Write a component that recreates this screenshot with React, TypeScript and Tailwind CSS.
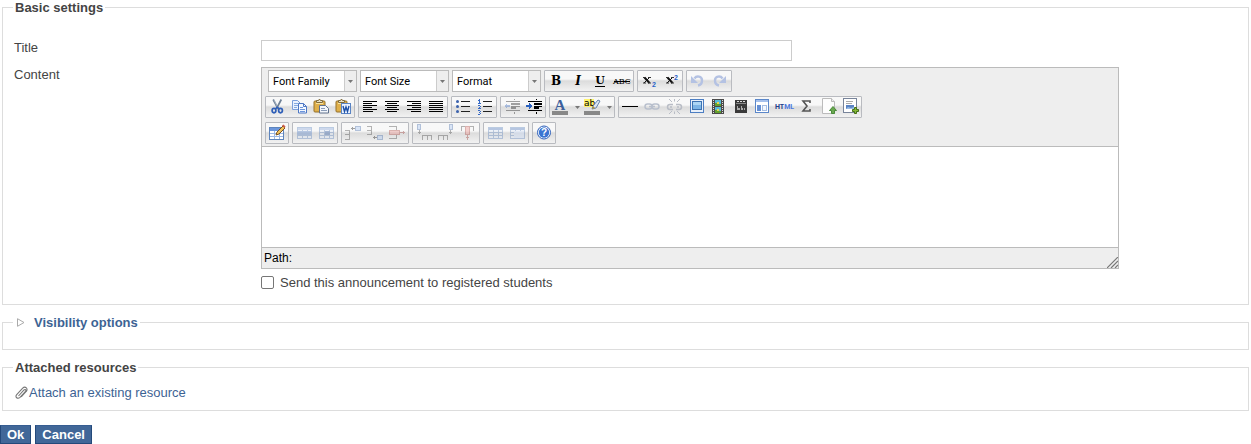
import React from "react";

type IconProps = { children: React.ReactNode; faded?: boolean; smooth?: boolean };

function Glyph({ children, faded, smooth }: IconProps) {
  return (
    <svg
      viewBox="0 0 20 20"
      width="20"
      height="20"
      aria-hidden="true"
      shapeRendering={smooth ? "auto" : "crispEdges"}
      className={faded ? "block overflow-visible opacity-35" : "block overflow-visible"}
    >
      {children}
    </svg>
  );
}

function Lines({ rows, color = "#000" }: { rows: [number, number, number][]; color?: string }) {
  return (
    <>
      {rows.map(([x, y, w]) => (
        <rect key={`${x}-${y}`} x={x} y={y} width={w} height="1" fill={color} />
      ))}
    </>
  );
}

const serif = "'Liberation Serif', serif";
const wideSerif = "'DejaVu Serif', serif";
const sans = "'Liberation Sans', sans-serif";

function Letter({ children, ...rest }: React.SVGProps<SVGTextElement>) {
  return (
    <text textAnchor="middle" fontFamily={serif} fontWeight="bold" fontSize="13" x="10" y="14" {...rest}>
      {children}
    </text>
  );
}

const Clipboard = () => (
  <>
    <rect x="3" y="4" width="11" height="11" rx="1" fill="#e0b04a" stroke="#94702a" />
    <rect x="5" y="5" width="7" height="2" fill="#f8e2a0" />
    <path d="M5.500 5.500v-2h2l1-1.500 1 1.500h2v2z" fill="#e9e2c8" stroke="#7e6a3a" />
  </>
);

const Grid = ({ header = "#7f9fd8" }: { header?: string }) => (
  <>
    <rect x="3" y="4" width="15" height="12" fill="#dbe6f8" />
    <rect x="3" y="4" width="15" height="3" fill={header} />
    <path d="M3.500 4.500h14v11h-14zM3 9.500h15M3 12.500h15M8.500 7v9M13.500 7v9" fill="none" stroke="#4d78b8" />
  </>
);

const icons = {
  bold: <Glyph smooth><Letter fontSize="12" fontFamily={wideSerif}>B</Letter></Glyph>,
  italic: <Glyph smooth><Letter fontSize="12" fontFamily={wideSerif} fontStyle="italic">I</Letter></Glyph>,
  underline: (
    <Glyph smooth>
      <Letter fontSize="11" fontFamily={wideSerif} y="13">U</Letter>
      <rect x="5" y="15" width="10" height="1" />
    </Glyph>
  ),
  strike: (
    <Glyph smooth>
      <Letter fontSize="8" fontFamily={wideSerif} fontWeight="normal" y="13">ABC</Letter>
      <rect x="2" y="10" width="16" height="1" />
    </Glyph>
  ),
  sub: (
    <Glyph smooth>
      <path d="M5.500 6.500l5 5.500" stroke="#111" strokeWidth="2" />
      <path d="M10.500 6.500l-5.500 5.500" stroke="#111" />
      <path d="M4 6.500h3M9 6.500h3M4 12h3M9 12h3" stroke="#333" />
      <Letter x="15" y="16" fontSize="7" fontFamily={sans} fill="#2a62c8">2</Letter>
    </Glyph>
  ),
  sup: (
    <Glyph smooth>
      <path d="M6.500 6.500l5 5.500" stroke="#111" strokeWidth="2" />
      <path d="M11.500 6.500l-5.500 5.500" stroke="#111" />
      <path d="M5 6.500h3M10 6.500h3M5 12h3M10 12h3" stroke="#333" />
      <Letter x="15" y="9" fontSize="7" fontFamily={sans} fill="#2a62c8">2</Letter>
    </Glyph>
  ),
  undo: (
    <Glyph smooth>
      <path d="M6.500 7.500c2-3 7.500-2.500 7.500 2 0 2.500-1.500 4.500-4 5" fill="none" stroke="#b4c2e3" strokeWidth="2.400" />
      <path d="M3 5v7h7z" fill="#b4c2e3" />
    </Glyph>
  ),
  redo: (
    <Glyph smooth>
      <path d="M12.500 7.500c-2-3-7.500-2.500-7.500 2 0 2.500 1.500 4.500 4 5" fill="none" stroke="#b4c2e3" strokeWidth="2.400" />
      <path d="M16 5v7H9z" fill="#b4c2e3" />
    </Glyph>
  ),
  cut: (
    <Glyph smooth>
      <path d="M6.200 2.500l5 9.500M14.300 2.500l-5 9.500" stroke="#6f8196" strokeWidth="1.700" />
      <path d="M7 3l4 8" stroke="#c5d0de" strokeWidth=".6" />
      <ellipse cx="7" cy="13.600" rx="1.900" ry="2.200" fill="none" stroke="#2f5fb8" strokeWidth="1.700" />
      <ellipse cx="13.500" cy="13.600" rx="1.900" ry="2.200" fill="none" stroke="#2f5fb8" strokeWidth="1.700" />
      <path d="M8.300 12l2-2 2 2" fill="none" stroke="#2f5fb8" strokeWidth="1.500" />
    </Glyph>
  ),
  copy: (
    <Glyph smooth>
      <path d="M3.500 3.500h5l2.500 2.500v6.500H3.500z" fill="#eaf2ff" stroke="#7c9fda" />
      <path d="M5 6.500h4M5 8.500h4M5 10.500h3" stroke="#86aae0" />
      <path d="M9.500 6.500h5l3 3v6.500h-8z" fill="#f4f8ff" stroke="#4d77c4" />
      <path d="M14.500 6.500v3h3" fill="none" stroke="#4d77c4" />
      <path d="M11 10.500h3M11 12.500h5M11 14.500h5" stroke="#6b95dc" />
    </Glyph>
  ),
  paste: (
    <Glyph smooth>
      <Clipboard />
      <path d="M8.500 8.500h6l3 3v4.500h-9z" fill="#f2f5fa" stroke="#60718c" />
      <path d="M10 11.500h4M10 13.500h6" stroke="#8b9cb8" />
    </Glyph>
  ),
  pasteWord: (
    <Glyph smooth>
      <Clipboard />
      <rect x="8.500" y="6.500" width="9" height="10" fill="#eaf2ff" stroke="#5a84c4" />
      <path d="M10 9l1.500 5.500 1.500-4.500 1.500 4.500 1.500-5.500" fill="none" stroke="#1d50a8" strokeWidth="1.400" />
    </Glyph>
  ),
  left: <Glyph><Lines rows={[[3, 4, 14], [3, 6, 9], [3, 8, 14], [3, 10, 9], [3, 12, 14], [3, 14, 10]]} /></Glyph>,
  center: <Glyph><Lines rows={[[3, 4, 14], [5, 6, 10], [3, 8, 14], [5, 10, 10], [3, 12, 14], [5, 14, 10]]} /></Glyph>,
  right: <Glyph><Lines rows={[[3, 4, 14], [8, 6, 9], [3, 8, 14], [8, 10, 9], [3, 12, 14], [7, 14, 10]]} /></Glyph>,
  full: <Glyph><Lines rows={[[3, 4, 14], [3, 6, 14], [3, 8, 14], [3, 10, 14], [3, 12, 14], [3, 14, 14]]} /></Glyph>,
  bullets: (
    <Glyph smooth>
      <path d="M8 4.500h9M8 9.500h9M8 14.500h9" stroke="#222" />
      <circle cx="4.500" cy="4.500" r="1.500" fill="#3b62ad" />
      <circle cx="4.500" cy="9.500" r="1.500" fill="#3b62ad" />
      <circle cx="4.500" cy="14.500" r="1.500" fill="#3b62ad" />
    </Glyph>
  ),
  numbers: (
    <Glyph>
      <Lines rows={[[8, 4, 9], [8, 9, 9], [8, 14, 9]]} color="#222" />
      <path d="M4 2h1v4h-1zM3 3h1v1H3zM3 6h3v1H3zM3 8h2v1H3zM5 9h1v1H5zM4 10h1v1H4zM3 11h3v1H3zM3 13h2v1H3zM5 14h1v1H5zM4 15h1v1H4zM5 16h1v1H5zM3 17h2v1H3z" fill="#3668c4" />
    </Glyph>
  ),
  outdent: (
    <Glyph faded>
      <Lines rows={[[4, 4, 14], [9, 6, 9], [9, 9, 9], [9, 11, 5], [4, 13, 14]]} />
      <path d="M9 7h9v1H9zM9 10h5v1H9zM12 2h1v1h-1zM12 15h1v2h-1z" />
      <path d="M2 9l3-3v2h3v2H5v2z" fill="#2b62c0" />
    </Glyph>
  ),
  indent: (
    <Glyph>
      <Lines rows={[[4, 4, 14], [10, 6, 8], [10, 9, 8], [10, 11, 5], [4, 13, 14]]} />
      <path d="M10 7h8v1h-8zM10 10h5v1h-5zM12 2h1v1h-1zM12 15h1v2h-1z" />
      <path d="M8 9L5 6v2H2v2h3v2z" fill="#2b62c0" />
    </Glyph>
  ),
  color: (
    <Glyph smooth>
      <Letter x="9" y="13" fontSize="15" fill="#3c5f9c">A</Letter>
      <rect x="1" y="14" width="16" height="4" fill="#888" />
    </Glyph>
  ),
  highlight: (
    <Glyph smooth>
      <rect x="1" y="2" width="10" height="8" fill="#fff36d" />
      <text x="1" y="9" fontSize="9" fontFamily="'DejaVu Sans', sans-serif">ab</text>
      <path d="M9 12l1-3 5-6 2 1-4 7z" fill="#dce7f6" stroke="#6583ad" />
      <path d="M9 12l1-3 2 2z" fill="#b6922e" />
      <rect x="1" y="14" width="16" height="4" fill="#888" />
    </Glyph>
  ),
  rule: <Glyph><rect x="2" y="9" width="16" height="1" /></Glyph>,
  link: (
    <Glyph smooth>
      <g fill="none" stroke="#b9c0cd" strokeWidth="1.500">
        <rect x="3" y="7" width="7" height="5" rx="2.500" />
        <rect x="10" y="7" width="7" height="5" rx="2.500" />
        <path d="M7 9.500h6" />
      </g>
    </Glyph>
  ),
  unlink: (
    <Glyph smooth>
      <g fill="none" stroke="#b9bdc6" strokeWidth="1.500">
        <path d="M9 7.500H6a2.200 2.200 0 000 5h3M12 7.500h3a2.200 2.200 0 010 5h-3M6 10h2M13 10h2" />
        <path d="M8 5L5 2M10.500 4.500V2M13 5l3-3M8 14l-3 3M10.500 14.500V17M13 14l3 3" strokeWidth="1" />
      </g>
    </Glyph>
  ),
  image: (
    <Glyph>
      <rect x="4.500" y="2.500" width="13" height="13" fill="#e8f0fa" stroke="#4d7ec2" />
      <rect x="6.500" y="4.500" width="9" height="8" fill="#7db5e6" stroke="#3d72b0" />
      <path d="M7 5h8v3H7z" fill="#add6f5" />
    </Glyph>
  ),
  media: (
    <Glyph>
      <rect x="4" y="2" width="12" height="15" fill="#4a4a4a" />
      <rect x="7" y="3" width="6" height="6" fill="#58b9d8" />
      <rect x="7" y="10" width="6" height="6" fill="#58b9d8" />
      <path d="M7 6h3v1h3v2H7zM7 13h3v1h3v2H7z" fill="#63a02f" />
      <path d="M9 5h2v2H9zM9 12h2v2H9z" fill="#e7d64b" />
      <path d="M5.500 3v14M14.500 3v14" stroke="#ddd" strokeDasharray="1 1" />
    </Glyph>
  ),
  clapper: (
    <Glyph>
      <rect x="5" y="3" width="12" height="13" fill="#3a3a3a" />
      <path d="M7 4h2v1H7zM10 4h2v1h-2zM13 4h2v1h-2z" fill="#ddd" />
      <path d="M6 6.500h10" stroke="#888" />
      <path d="M7 9h1v4H7zM8 11h2v2H8zM11 9h1v4h-1zM12 11h1v2h-1zM14 11h1v2h-1z" fill="#aaa" />
    </Glyph>
  ),
  template: (
    <Glyph>
      <rect x="3.500" y="2.500" width="13" height="13" fill="#fff" stroke="#5b87c9" />
      <rect x="4" y="3" width="12" height="2" fill="#a5c0ec" />
      <rect x="5" y="8" width="4" height="6" fill="#6690d4" />
      <rect x="10.500" y="8.500" width="4" height="5" fill="#f3f7fd" stroke="#a6bee3" />
    </Glyph>
  ),
  html: (
    <Glyph smooth>
      <text x="1" y="12" fontSize="7" fontWeight="bold" fontFamily="Roboto, sans-serif" fill="#23408a">
        HT<tspan fill="#4c79df">ML</tspan>
      </text>
    </Glyph>
  ),
  sigma: (
    <Glyph smooth>
      <path d="M14 6V4H7l4 5-4 5h7v-2" fill="none" stroke="#555" strokeWidth="1.600" />
    </Glyph>
  ),
  upload: (
    <Glyph smooth>
      <path d="M4.500 1.500h9l3 3v12h-12z" fill="#fdfdfd" stroke="#bbb" />
      <path d="M13.500 1.500v3h3" fill="#eee" stroke="#bbb" />
      <path d="M15 9.500l3.500 4h-2v3h-3v-3h-2z" fill="#6aa850" stroke="#4a8a3a" />
    </Glyph>
  ),
  addBlock: (
    <Glyph smooth>
      <rect x="3.500" y="1.500" width="13" height="14" fill="#fff" stroke="#78849a" />
      <path d="M6 4.500h7M6 6.500h6" stroke="#aaa" />
      <path d="M6 8h8v4H6z" fill="#5983c4" />
      <path d="M6 12l2-2 3 1 3-1v2z" fill="#99bce6" />
      <path d="M14.500 10.500h2v2h2v2h-2v2h-2v-2h-2v-2h2z" fill="#85b936" stroke="#456f17" />
    </Glyph>
  ),
  table: (
    <Glyph smooth>
      <rect x="2.500" y="4.500" width="14" height="12" fill="#fff" stroke="#5e85bd" />
      <path d="M3 5h13v3H3z" fill="#6c96db" />
      <path d="M3 10.500h13M3 13.500h13M7.500 8v8M12.500 8v8" stroke="#9db8e3" />
      <path d="M9 12l1-3 6-6 2 2-6 6z" fill="#f1c35b" stroke="#785122" />
      <path d="M15 2.500l2.500 2.500 1-1.500-2-2z" fill="#ce5d4c" />
    </Glyph>
  ),
  rowProps: (
    <Glyph faded>
      <Grid />
      <rect x="3" y="8" width="15" height="4" fill="#4778c4" />
    </Glyph>
  ),
  cellProps: (
    <Glyph faded>
      <Grid />
      <rect x="9" y="8" width="5" height="4" fill="#174b9c" />
    </Glyph>
  ),
  rowBefore: (
    <Glyph faded>
      <path d="M2 7.500h5M2 11.500h5M2 16.500h5M6.500 7v9" fill="none" stroke="#333" />
      <rect x="12.500" y="3.500" width="5" height="4" fill="#9fc1f3" stroke="#315da2" />
      <path d="M8 5h4v1H8zM9 4h1v3H9z" />
    </Glyph>
  ),
  rowAfter: (
    <Glyph faded>
      <path d="M2 3.500h5M2 7.500h5M2 11.500h5M6.500 3v9" fill="none" stroke="#333" />
      <rect x="12.500" y="12.500" width="5" height="4" fill="#9fc1f3" stroke="#315da2" />
      <path d="M8 14h4v1H8zM9 13h1v3H9z" />
    </Glyph>
  ),
  rowDelete: (
    <Glyph faded>
      <path d="M2 3.500h8M2 15.500h8M9.500 4v12" fill="none" stroke="#333" />
      <rect x="2.500" y="7.500" width="10" height="4" fill="#ee8680" stroke="#a4322b" />
      <path d="M13 9h5v1h-5zM16 8h1v3h-1z" fill="#912923" />
    </Glyph>
  ),
  colBefore: (
    <Glyph faded>
      <rect x="3.500" y="1.500" width="3" height="5" fill="#9fc1f3" stroke="#315da2" />
      <path d="M5.500 7v4M4 9.500h3" stroke="#333" />
      <path d="M8.500 17v-5h9v5M13.500 12v5" fill="none" stroke="#333" />
    </Glyph>
  ),
  colAfter: (
    <Glyph faded>
      <rect x="13.500" y="1.500" width="3" height="5" fill="#9fc1f3" stroke="#315da2" />
      <path d="M14.500 7v4M13 9.500h3" stroke="#333" />
      <path d="M2.500 17v-5h9v5M7.500 12v5" fill="none" stroke="#333" />
    </Glyph>
  ),
  colDelete: (
    <Glyph faded>
      <path d="M3.500 8V3.500h12V8" fill="none" stroke="#333" />
      <rect x="7.500" y="3.500" width="4" height="8" fill="#ee8680" stroke="#a4322b" />
      <path d="M9 12h1v5H9zM8 14h3v1H8z" fill="#912923" />
    </Glyph>
  ),
  split: <Glyph faded><Grid header="#3e6cb8" /></Glyph>,
  merge: (
    <Glyph faded>
      <Grid header="#3e6cb8" />
      <rect x="7" y="8" width="10" height="7" fill="#c6dafa" />
    </Glyph>
  ),
  help: (
    <Glyph smooth>
      <circle cx="10" cy="9.500" r="6.500" fill="#fff" stroke="#2c5fba" />
      <circle cx="10" cy="9.500" r="5.200" fill="#3a74d2" />
      <Letter y="13" fontSize="10" fontFamily={sans} fill="#fff">?</Letter>
    </Glyph>
  ),
};

type IconName = keyof typeof icons;

const Triangle = () => (
  <svg viewBox="0 0 5 3" width="5" height="3" aria-hidden="true">
    <path d="M0 0h5L2.500 3z" fill="#777" />
  </svg>
);

function Group({ items }: { items: [IconName, string, boolean?][] }) {
  return (
    <div className="flex h-[22px] rounded-[1px] border border-[#b9bbc0] bg-linear-to-b from-[#f8f8f8] from-40% via-[#dcdcdc] via-50% to-[#f2f2f2]">
      {items.map(([icon, label, menu]) => (
        <React.Fragment key={icon}>
          <button type="button" aria-label={label} title={label} className="flex w-[22px] items-center justify-center">
            {icons[icon]}
          </button>
          {menu && (
            <button type="button" aria-label={`${label} menu`} className="flex w-[10px] items-center justify-center">
              <Triangle />
            </button>
          )}
        </React.Fragment>
      ))}
    </div>
  );
}

function Picker({ label }: { label: string }) {
  return (
    <div className="relative h-[22px] w-[89px]">
      <select
        aria-label={label}
        className="h-full w-full appearance-none border border-[#bbb] bg-white pr-3 pl-1 font-[Roboto,sans-serif] text-[11px] text-black"
      >
        <option>{label}</option>
      </select>
      <span className="pointer-events-none absolute inset-y-px right-px flex w-3 items-center justify-center border-l border-[#ccc] bg-[#eee]">
        <Triangle />
      </span>
    </div>
  );
}

const legendClass = "px-[2px] font-bold leading-[15px]";
const fieldsetClass = "mx-[2px] border border-[#ddd] px-[10px]";
const buttonClass =
  "h-[19px] border border-[#24497a] border-t-[#365d92] bg-[#416798] px-[6px] font-bold leading-[15px] text-white";

export default function App() {
  return (
    <form
      className="bg-white font-['Liberation_Sans',sans-serif] text-[13px] leading-[15px] text-[#444]"
      onSubmit={(e) => e.preventDefault()}
    >
      <fieldset className={`${fieldsetClass} pb-[14px]`}>
        <legend className={legendClass}>Basic settings</legend>
        <div className="flex flex-col gap-[6px] pt-[25px] pl-px">
          <div className="flex items-start">
            <label htmlFor="title" className="w-[247px] shrink-0">Title</label>
            <input
              id="title"
              type="text"
              className="h-[21px] w-full max-w-[531px] border border-[#ccc] bg-white px-1"
            />
          </div>
          <div className="flex items-start">
            <label htmlFor="content" className="w-[247px] shrink-0">Content</label>
            <div className="w-full max-w-[858px] min-w-0">
              <div className="border border-[#bbb] bg-[#eee]">
                <div className="flex flex-col gap-1 border-b border-[#bbb] px-[3px] py-[2px]">
                  <div className="flex flex-wrap gap-[3px] pl-[3px]">
                    <Picker label="Font Family" />
                    <Picker label="Font Size" />
                    <Picker label="Format" />
                    <Group items={[["bold", "Bold"], ["italic", "Italic"], ["underline", "Underline"], ["strike", "Strikethrough"]]} />
                    <Group items={[["sub", "Subscript"], ["sup", "Superscript"]]} />
                    <Group items={[["undo", "Undo"], ["redo", "Redo"]]} />
                  </div>
                  <div className="flex flex-wrap gap-[3px]">
                    <Group items={[["cut", "Cut"], ["copy", "Copy"], ["paste", "Paste"], ["pasteWord", "Paste from Word"]]} />
                    <Group items={[["left", "Align left"], ["center", "Align center"], ["right", "Align right"], ["full", "Justify"]]} />
                    <Group items={[["bullets", "Bulleted list"], ["numbers", "Numbered list"]]} />
                    <Group items={[["outdent", "Outdent"], ["indent", "Indent"]]} />
                    <Group items={[["color", "Text color", true], ["highlight", "Highlight color", true]]} />
                    <Group
                      items={[
                        ["rule", "Horizontal line"], ["link", "Link"], ["unlink", "Unlink"], ["image", "Image"],
                        ["media", "Media"], ["clapper", "Video"], ["template", "Template"], ["html", "HTML source"],
                        ["sigma", "Equation"], ["upload", "Upload document"], ["addBlock", "Insert block"],
                      ]}
                    />
                  </div>
                  <div className="flex flex-wrap gap-[3px]">
                    <Group items={[["table", "Table"]]} />
                    <Group items={[["rowProps", "Row properties"], ["cellProps", "Cell properties"]]} />
                    <Group items={[["rowBefore", "Insert row before"], ["rowAfter", "Insert row after"], ["rowDelete", "Delete row"]]} />
                    <Group items={[["colBefore", "Insert column before"], ["colAfter", "Insert column after"], ["colDelete", "Delete column"]]} />
                    <Group items={[["split", "Split cells"], ["merge", "Merge cells"]]} />
                    <Group items={[["help", "Help"]]} />
                  </div>
                </div>
                <textarea id="content" className="block h-[100px] w-full resize-none bg-white p-2 text-black outline-none" />
                <div className="flex h-[21px] items-end justify-between border-t border-[#bbb] pl-[2px] text-xs text-black">
                  <span className="self-center">Path:</span>
                  <svg viewBox="0 0 11 11" width="11" height="11" aria-hidden="true">
                    <path d="M0 11L11 0M4 11l7-7M8 11l3-3" stroke="#777" strokeWidth="1.200" />
                  </svg>
                </div>
              </div>
              <div className="mt-[6px] flex items-center gap-[6px]">
                <input
                  id="notify"
                  type="checkbox"
                  className="size-[13px] appearance-none rounded-[2px] border border-[#767676] bg-white checked:bg-[#416798]"
                />
                <label htmlFor="notify">Send this announcement to registered students</label>
              </div>
            </div>
          </div>
        </div>
      </fieldset>

      <fieldset className={`${fieldsetClass} mt-[10px] pb-[19px]`}>
        <legend className={legendClass}>
          <a href="#visibility" className="flex items-center text-[#3d6394]">
            <svg viewBox="0 0 9 9" width="9" height="9" className="mr-[9px] ml-[1px]" aria-hidden="true">
              <path d="M1.500 .7v7.600l6.500-3.800z" fill="#fff" stroke="#aaa" />
            </svg>
            Visibility options
          </a>
        </legend>
      </fieldset>

      <fieldset className={`${fieldsetClass} mt-[10px] pb-[10px]`}>
        <legend className={legendClass}>Attached resources</legend>
        <a href="#attach" className="flex items-center pt-[10px] pl-[2px] text-[#3d6394]">
          <svg viewBox="0 0 14 14" width="14" height="14" fill="none" aria-hidden="true">
            <path
              d="M3.500 10l5.500-6c1.200-1.200 2.600.1 1.500 1.300l-5.500 6c-2.300 2.300-5.500-.3-3.300-2.700l6-6.400c2.500-2.500 6 .7 3.500 3.300l-5 5.500"
              stroke="#777"
              strokeWidth="1.100"
            />
          </svg>
          Attach an existing resource
        </a>
      </fieldset>

      <div className="mt-[14px] flex gap-1">
        <button type="submit" className={buttonClass}>Ok</button>
        <button type="button" className={buttonClass}>Cancel</button>
      </div>
    </form>
  );
}
